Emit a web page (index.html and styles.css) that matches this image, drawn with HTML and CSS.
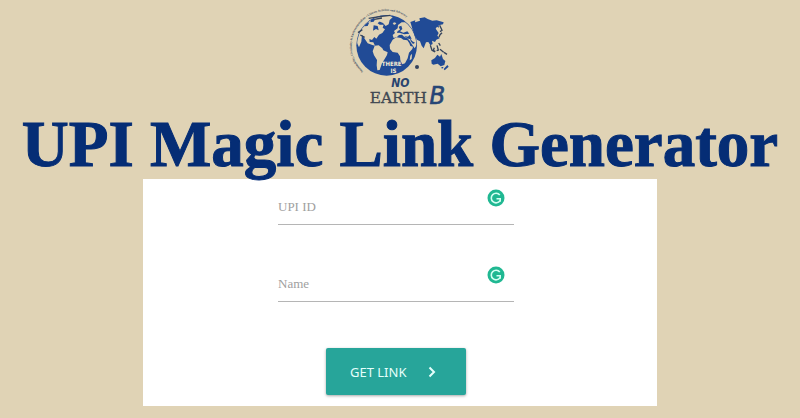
FILE: index.html
```html
<!DOCTYPE html>
<html lang="en">
<head>
<meta charset="utf-8">
<meta name="viewport" content="width=device-width, initial-scale=1">
<title>UPI Magic Link Generator</title>
<link rel="stylesheet" href="styles.css">
</head>
<body>
<header class="header">
  <svg class="logo" viewBox="0 0 360 345" role="img" aria-label="There is no Earth B">
    <defs>
      <path id="arc-left" d="M70 214A102 102 0 0 1 75 56"/>
      <path id="arc-top" d="M80 52A102 102 0 0 1 212 62"/>
      <clipPath id="globe"><circle cx="140" cy="136" r="89"/></clipPath>
    </defs>
    <circle class="land" cx="140" cy="136" r="91"/>
    <g clip-path="url(#globe)">
      <path class="sand" d="M49 125L55 92L76 65L94 57L91 67L101 65L106 57L123 60L113 70L119 74L131 74L128 83L135 88L127 99L117 104L109 116L103 111L96 120L88 117L89 126L100 127L105 137L97 135L83 130L72 113L66 104L64 125L57 142Z"/>
      <path class="sand" d="M104 137L116 136L127 145L130 151L143 157L141 165L134 177L126 190L119 210L112 211L110 196L111 180L102 166L98 154Z"/>
      <path class="sand" d="M96 54L116 48L149 47L158 52L149 60L146 73L137 78L129 69L115 63Z"/>
      <path class="sand" d="M158 105L165 99L162 93L173 85L174 75L185 67L197 67L208 77L220 91L228 111L230 135L224 145L215 132L209 122L201 113L193 111L186 104L177 105L171 111L161 114Z"/>
      <path class="sand" d="M158 119L169 112L183 114L190 119L202 121L208 130L211 138L219 140L217 147L207 158L203 175L195 190L187 193L181 181L180 169L173 158L158 156L150 147L149 135Z"/>
      <path class="land" d="M72 72L88 67L83 78L73 79ZM101 76L113 78L116 91L108 87L99 92ZM176 80L184 77L187 87L180 94L190 98L202 94L208 101L193 103L178 98L171 99L173 93L180 89ZM192 108L204 110L209 105L215 116L207 117ZM209 111L216 123L225 128L219 132L212 124Z"/>
      <path class="sand" d="M211 167L216 161L215 177L209 181ZM158 69L165 67L169 71L162 75Z"/>
    </g>
    <path class="line" d="M54 98L67 89M86 55L104 52L119 50L151 46M103 58L126 54M61 105L74 112"/>
    <path class="land" d="M211 66L226 61L225 67L240 62L238 55L254 52L263 57L277 62L290 61L311 67L309 73L296 76L297 83L291 80L287 86L296 99L292 107L299 115L289 119L285 126L276 122L278 132L271 136L265 126L258 127L251 145L245 137L240 124L231 119L224 107L218 89Z"/>
    <path class="line" d="M299 76L306 91L300 95M297 112L300 104L306 98M271 136L276 151L285 156M283 143L280 151L286 155M291 136L295 150L290 152M300 148L311 157M312 157L321 163M296 129L301 137"/>
    <path class="land" d="M274 181L285 174L292 164L300 170L304 162L309 177L316 183L313 195L302 199L293 191L280 194L275 191ZM304 201L311 201L306 207ZM322 195L326 200L314 211L311 207Z"/>
    <circle class="dark" cx="231" cy="201" r="6"/>
    <text class="ring"><textPath href="#arc-left">Sustainability, Circularity &amp; Environmentalism</textPath></text>
    <text class="ring"><textPath href="#arc-top">• Climate Activism and Advocacy</textPath></text>
    <text class="small" x="155" y="198">THERE</text>
    <text class="small" x="160" y="219">IS</text>
    <text class="no" x="181" y="260">NO</text>
    <text class="earth" x="175" y="308">EARTH</text>
    <text class="plan" x="292" y="313">B</text>
  </svg>
  <h1 class="title">UPI Magic Link Generator</h1>
</header>
<main class="panel">
  <form class="form">
    <div class="field">
      <label class="label" for="upi">UPI ID</label>
      <input class="input" id="upi" type="text">
      <svg class="badge" viewBox="0 0 18 18" aria-hidden="true"><circle cx="9" cy="9" r="8.5"/><path d="M12.8 6A4.8 4.8 0 1 0 13 11.8M9.5 9.7H13.2V12.8"/></svg>
    </div>
    <div class="field">
      <label class="label" for="name">Name</label>
      <input class="input" id="name" type="text">
      <svg class="badge" viewBox="0 0 18 18" aria-hidden="true"><circle cx="9" cy="9" r="8.5"/><path d="M12.8 6A4.8 4.8 0 1 0 13 11.8M9.5 9.7H13.2V12.8"/></svg>
    </div>
    <button class="button" type="button">GET LINK
      <svg class="chevron" viewBox="0 0 8 12" aria-hidden="true"><path d="M1.5 1.5L6 6L1.5 10.5"/></svg>
    </button>
  </form>
</main>
</body>
</html>
```
FILE: styles.css
```css
* { box-sizing: border-box; }
body {
  margin: 0;
  padding-bottom: 12px;
  background: #e0d3b5;
  font-family: "Liberation Serif", serif;
}
.header {
  display: flex;
  flex-direction: column;
  align-items: center;
}
.logo { width: 120px; height: 115px; }
.land { fill: #214b96; }
.sand { fill: #e0d3b5; }
.dark { fill: #34435c; }
.line { fill: none; stroke: #34435c; stroke-width: 4; }
.ring { font: bold 9px "Liberation Serif", serif; fill: #34435c; }
.small { font: bold 18px "DejaVu Sans Condensed", sans-serif; fill: #f3ead2; text-anchor: middle; }
.no { font: italic bold 36px "DejaVu Sans Condensed", sans-serif; fill: #29446f; text-anchor: middle; }
.earth { font: 46px "DejaVu Serif", serif; fill: #414852; stroke: #414852; stroke-width: 1; text-anchor: middle; }
.plan { font: italic 76px "DejaVu Sans Condensed", sans-serif; fill: #264576; stroke: #264576; stroke-width: 2; text-anchor: middle; }
.title {
  margin: 0 0 6px;
  color: #052d75;
  font-size: 65px;
  font-weight: 700;
  line-height: 58px;
  white-space: nowrap;
  -webkit-text-stroke: 1px #052d75;
}
.panel {
  width: 64.25%;
  margin: 0 auto;
  padding: 0 8px 11px 0;
  background: #fff;
}
.form {
  display: flex;
  flex-direction: column;
  align-items: center;
}
.field {
  position: relative;
  display: grid;
  width: 236px;
  margin-bottom: 31px;
}
.label, .input { grid-area: 1 / 1; }
.label {
  padding-top: 20px;
  color: #a0a0a0;
  font-size: 13px;
  line-height: 16px;
}
.input {
  width: 100%;
  height: 46px;
  padding: 12px 32px 0 0;
  border: 0;
  border-bottom: 1px solid #b5b5b5;
  outline: 0;
  background: transparent;
  font: 13px "Liberation Serif", serif;
}
.badge {
  position: absolute;
  top: 10px;
  right: 9px;
  width: 18px;
  height: 18px;
}
.badge circle { fill: #20b892; }
.badge path { fill: none; stroke: #d4fff3; stroke-width: 1.6; }
.button {
  display: flex;
  align-items: center;
  gap: 22px;
  width: 140px;
  height: 47px;
  margin-top: 15px;
  padding: 0 24px;
  border: 0;
  border-radius: 2px;
  background: #27a59a;
  box-shadow: 0 1px 3px rgba(0, 0, 0, .35);
  color: #e5fffb;
  font: 13px "Noto Sans", sans-serif;
}
.chevron { width: 8px; height: 12px; }
.chevron path { fill: none; stroke: currentColor; stroke-width: 2; }
```
